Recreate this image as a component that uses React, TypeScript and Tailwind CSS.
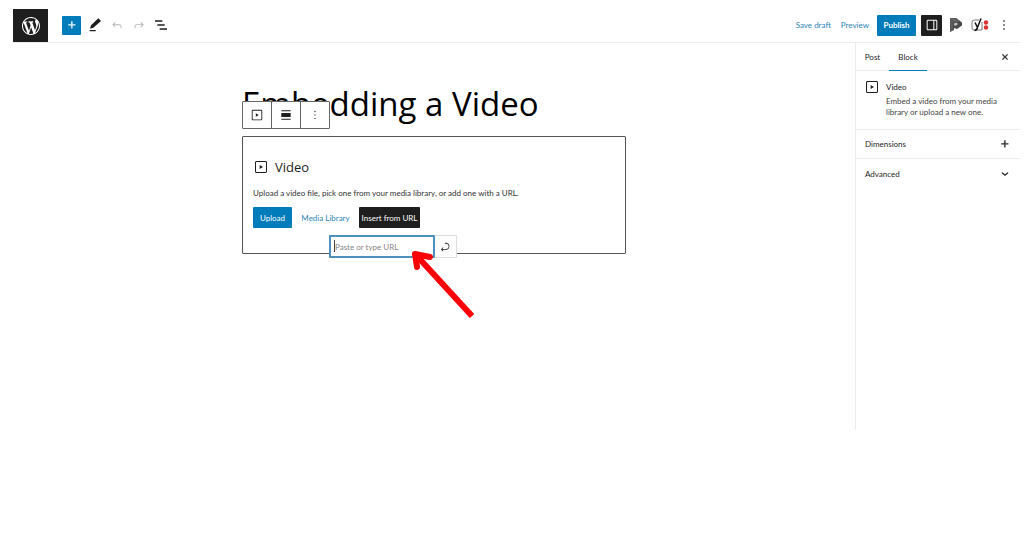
import type { ReactNode } from 'react';

const paths = {
  video:
    'M18.7 3H5.3C4 3 3 4 3 5.3v13.4C3 20 4 21 5.3 21h13.4c1.3 0 2.3-1 2.3-2.3V5.3C21 4 20 3 18.7 3zm.8 15.7c0 .4-.4.8-.8.8H5.3c-.4 0-.8-.4-.8-.8V5.3c0-.4.4-.8.8-.8h13.4c.4 0 .8.4.8.8v13.4zM10 15l5-3-5-3v6z',
  plus: 'M11 12.5V17.5H12.5V12.5H17.5V11H12.5V6H11V11H6V12.5H11Z',
  edit: 'M20.1 5.1L16.9 2 6.2 12.7l-1.3 4.4 4.5-1.3L20.1 5.1zM4 20.8h8v-1.5H4v1.5z',
  undo: 'M18.3 11.7c-.6-.6-1.4-.9-2.3-.9H6.7l2.9-3.3-1.1-1-4.5 5L8.5 16l1-1-2.7-2.7H16c.5 0 .9.2 1.3.5 1 1 1 3.4 1 4.5v.3h1.5v-.2c0-1.5 0-4.3-1.5-5.7z',
  redo: 'M15.6 6.5l-1.1 1 2.9 3.3H8c-.9 0-1.7.3-2.3.9-1.4 1.5-1.4 4.2-1.4 5.6v.2h1.5v-.3c0-1.1 0-3.5 1-4.5.3-.3.7-.5 1.3-.5h9.2L14.5 15l1.1 1.1 4.6-4.6-4.6-5z',
  list: 'M3 5h11v2H3V5Zm3.5 6h11v2h-11v-2ZM21 17H10v2h11v-2Z',
  drawer:
    'M18 4H6c-1.1 0-2 .9-2 2v12c0 1.1.9 2 2 2h12c1.1 0 2-.9 2-2V6c0-1.1-.9-2-2-2zm-4 14.5H6c-.3 0-.5-.2-.5-.5V6c0-.3.2-.5.5-.5h8v13zm4.5-.5c0 .3-.2.5-.5.5h-2.5v-13H18c.3 0 .5.2.5.5v12z',
  more: 'M13 19h-2v-2h2v2zm0-6h-2v-2h2v2zm0-6h-2V5h2v2z',
  align: 'M4 4h16v1.5H4V4Zm0 4.5h16v7H4v-7Zm0 10h16V20H4v-1.5Z',
  close:
    'M12 13.06l3.712 3.713 1.061-1.06L13.061 12l3.712-3.712-1.06-1.06L12 10.938 8.288 7.227l-1.061 1.06L10.939 12l-3.712 3.712 1.06 1.061L12 13.061z',
  chevron: 'M17.5 10.6L12 15l-5.5-4.4.9-1.2L12 13l4.5-3.6 1 1.2z',
  enter:
    'M6.734 16.106l2.176-2.38-1.093-1.028-3.846 4.158 3.846 4.157 1.093-1.027-2.176-2.38h2.811c1.125 0 2.25.03 3.374 0 1.428-.001 3.362-.25 4.963-1.277 1.66-1.065 2.868-2.906 2.868-5.859 0-2.479-1.327-4.896-3.65-5.93-1.82-.813-3.044-.8-4.806-.788l-.567.002v1.5c.184 0 .368 0 .553-.002 1.82-.007 2.704-.014 4.21.657 1.854.827 2.76 2.657 2.76 4.561 0 2.472-.973 3.824-2.178 4.596-1.258.807-2.864 1.04-4.163 1.04h-.02c-1.115.03-2.229 0-3.344 0H6.734z',
};

function Icon({ name, className = 'size-4', bold = false }: { name: keyof typeof paths; className?: string; bold?: boolean }) {
  return (
    <svg viewBox="0 0 24 24" className={className} fill="currentColor" stroke={bold ? 'currentColor' : 'none'} strokeWidth={0.7} aria-hidden="true">
      <path d={paths[name]} />
    </svg>
  );
}

function WordPressMark() {
  return (
    <svg viewBox="0 0 20 20" className="size-[18px]" fill="currentColor" aria-hidden="true">
      <path d="M20 10c0-5.51-4.49-10-10-10C4.48 0 0 4.49 0 10c0 5.52 4.48 10 10 10 5.51 0 10-4.48 10-10zM7.78 15.37L4.37 6.22c.55-.02 1.17-.08 1.17-.08.5-.06.44-1.13-.06-1.11 0 0-1.45.11-2.37.11-.18 0-.37 0-.58-.01C4.12 2.69 6.87 1.11 10 1.11c2.33 0 4.45.87 6.05 2.34-.68-.11-1.65.39-1.65 1.58 0 .74.45 1.36.9 2.1.35.61.55 1.36.55 2.46 0 1.49-1.4 5-1.4 5l-3.03-8.37c.54-.02.82-.17.82-.17.5-.05.44-1.25-.06-1.22 0 0-1.44.12-2.38.12-.87 0-2.33-.12-2.33-.12-.5-.03-.56 1.2-.06 1.22l.92.08 1.26 3.41zM17.41 10c.24-.64.74-1.87.43-4.25.7 1.29 1.05 2.71 1.05 4.25 0 3.29-1.73 6.24-4.4 7.78.97-2.59 1.94-5.2 2.92-7.78zM6.1 18.09C3.12 16.65 1.11 13.53 1.11 10c0-1.3.23-2.48.72-3.59C3.25 10.3 4.67 14.2 6.1 18.09zm4.03-6.63l2.58 6.98c-.86.29-1.76.45-2.71.45-.79 0-1.57-.11-2.29-.33.81-2.38 1.62-4.74 2.42-7.1z" />
    </svg>
  );
}

function PluginMark() {
  return (
    <svg viewBox="0 0 14 14" className="size-3.5" aria-hidden="true">
      <path d="M1 0h6l6 4.5v3L8 11l-3-1v2l-4 2z" fill="#4a4a4a" />
      <path d="M1 0h6l4 3-6 2-4-2z" fill="#606060" />
      <path d="M5 5.500l2.500-.8 1.500 1.300-2 1.500H5z" fill="#c4c4c4" />
      <path d="M1 3l3 2v6l-3 3z" fill="#5c5c5c" />
    </svg>
  );
}

function YoastMark() {
  return (
    <svg viewBox="0 0 18 14" className="h-3.5 w-[18px]" aria-hidden="true">
      <path d="M8 2H3.5Q1 2 1 4.5v5Q1 12 2.5 12H11V4" fill="none" stroke="#777" strokeWidth="1" />
      <path d="m4 4.5 2.5 5L10 .5M6.500 9.500Q5.800 12.500 3.500 12.500" fill="none" stroke="#111" strokeWidth="1.5" />
      <circle cx="15" cy="4.5" r="2.2" fill="#dc3232" />
      <circle cx="15" cy="9.5" r="2.2" fill="#dc3232" />
    </svg>
  );
}

function IconButton({ label, children, className = '' }: { label: string; children: ReactNode; className?: string }) {
  return (
    <button type="button" aria-label={label} className={`flex shrink-0 items-center justify-center ${className}`}>
      {children}
    </button>
  );
}

function Header() {
  return (
    <header className="flex h-[35px] items-center border-b border-[#ececec]">
      <a href="#" aria-label="View posts" className="flex h-[33px] w-[35px] items-center justify-center self-end bg-[#1e1e1e] text-white">
        <WordPressMark />
      </a>
      <div className="ml-3.5 flex items-center gap-1.5">
        <IconButton label="Add block" className="size-[19px] rounded-[1px] bg-[#007cba] text-white">
          <Icon name="plus" className="size-3.5" bold />
        </IconButton>
        <IconButton label="Tools" className="size-4">
          <svg viewBox="0 0 24 24" className="size-4" fill="currentColor" aria-hidden="true">
            <path d="M21 6L17 2 6 12.500l-1.500 5 5-1.500L21 6zM4 21.500h9v-2H4v2z" />
          </svg>
        </IconButton>
        <IconButton label="Undo" className="size-4 text-[#b5b5b5]">
          <Icon name="undo" className="size-3.5" />
        </IconButton>
        <IconButton label="Redo" className="size-4 text-[#b5b5b5]">
          <Icon name="redo" className="size-3.5" />
        </IconButton>
        <IconButton label="List view" className="size-4">
          <Icon name="list" />
        </IconButton>
      </div>
      <div className="ml-auto flex items-center text-[#2c86b8]">
        <button type="button">Save draft</button>
        <button type="button" className="ml-2.5">Preview</button>
        <button type="button" className="ml-2 h-[21px] w-[39px] rounded-[1px] bg-[#007cba] font-bold text-white">Publish</button>
        <IconButton label="Settings" className="ml-[5px] size-[21px] rounded-[1px] bg-[#1e1e1e] text-white">
          <Icon name="drawer" />
        </IconButton>
        <IconButton label="Plugin panel" className="ml-[7px]">
          <PluginMark />
        </IconButton>
        <IconButton label="Yoast SEO" className="ml-2">
          <YoastMark />
        </IconButton>
        <IconButton label="Options" className="mr-2 ml-[7px] text-[#1e1e1e]">
          <Icon name="more" />
        </IconButton>
      </div>
    </header>
  );
}

function BlockToolbar() {
  return (
    <div role="toolbar" aria-label="Block tools" className="absolute top-[58px] left-0 flex h-7 w-[88px] divide-x divide-[#666] rounded-[1px] border border-[#666] bg-white">
      <IconButton label="Video" className="flex-1">
        <Icon name="video" className="size-3.5" />
      </IconButton>
      <IconButton label="Align" className="flex-1">
        <Icon name="align" className="size-3.5" />
      </IconButton>
      <IconButton label="More options" className="flex-1">
        <Icon name="more" className="size-3.5" />
      </IconButton>
    </div>
  );
}

function UrlPopover() {
  return (
    <form className="absolute top-[98px] left-[86px] flex h-[23px] w-[128px] rounded-[1px] border border-[#ddd] bg-white">
      <input
        type="url"
        aria-label="Video URL"
        placeholder="Paste or type URL"
        className="-m-px w-[106px] rounded-[1px] border-2 border-[#4f8fbd] pl-1 text-[8px] outline-none placeholder:text-[#858585]"
      />
      <span className="absolute top-1 left-1 h-3 w-px bg-[#444]" />
      <IconButton label="Apply" className="flex-1">
        <Icon name="enter" className="size-3" />
      </IconButton>
      <svg viewBox="0 0 64 70" className="absolute top-3 left-[80px] h-[70px] w-16" fill="none" stroke="#fb0007" aria-hidden="true">
        <path d="M62 68 6 7" strokeWidth="6" />
        <path d="M7 19 5 6l15 3" strokeWidth="6" strokeLinecap="round" strokeLinejoin="round" />
      </svg>
    </form>
  );
}

function Editor() {
  return (
    <main className="flex-1">
      <div className="relative mx-auto w-[384px] max-w-full">
        <h1 className="pt-9 font-['Open_Sans','Noto_Sans',sans-serif] text-[33px] leading-[50px] whitespace-nowrap text-black">Embedding a Video</h1>
        <BlockToolbar />
        <section className="relative mt-[7px] h-[118px] rounded-[1px] border border-[#555] px-2.5 pt-5">
          <h2 className="flex items-center gap-1.5 font-['Open_Sans','Noto_Sans',sans-serif] text-[13px] leading-5">
            <Icon name="video" className="size-4" />
            Video
          </h2>
          <p className="mt-2.5 leading-3 text-[#333]">Upload a video file, pick one from your media library, or add one with a URL.</p>
          <div className="mt-2 flex h-[21px]">
            <button type="button" className="w-[39px] rounded-[1px] bg-[#007cba] text-white">Upload</button>
            <button type="button" className="w-[67px] text-[#2c86b8]">Media Library</button>
            <button type="button" className="w-[61px] rounded-[1px] bg-[#1e1e1e] text-white">Insert from URL</button>
          </div>
          <UrlPopover />
        </section>
      </div>
    </main>
  );
}

function Sidebar() {
  return (
    <aside className="min-h-[387px] w-[165px] shrink-0 border-l border-[#ececec]">
      <div role="tablist" className="flex h-7 items-stretch border-b border-[#ececec]">
        <button type="button" role="tab" aria-selected="false" className="w-[33px]">Post</button>
        <button type="button" role="tab" aria-selected="true" className="-mb-px w-[38px] border-b border-[#007cba]">Block</button>
        <IconButton label="Close settings" className="mr-2 ml-auto">
          <Icon name="close" bold className="size-3.5" />
        </IconButton>
      </div>
      <div className="flex h-[59px] gap-1.5 border-b border-[#ececec] pt-2 pl-2">
        <Icon name="video" className="size-4 shrink-0" />
        <div>
          <h2 className="leading-[17px]">Video</h2>
          <p className="w-[124px] leading-[11px] text-[#444]">Embed a video from your media library or upload a new one.</p>
        </div>
      </div>
      <button type="button" className="flex h-[29px] w-full items-center justify-between border-b border-[#ececec] pr-2 pl-[9px]">
        Dimensions
        <Icon name="plus" bold className="size-3.5" />
      </button>
      <button type="button" className="flex h-[29px] w-full items-center justify-between pr-2 pl-[9px]">
        Advanced
        <Icon name="chevron" bold className="size-3.5" />
      </button>
    </aside>
  );
}

export default function App() {
  return (
    <div className="min-h-screen bg-white pt-2 pr-1 pl-[13px] font-[Lato,'Noto_Sans',sans-serif] text-[8px] text-[#1e1e1e]">
      <Header />
      <div className="flex">
        <Editor />
        <Sidebar />
      </div>
    </div>
  );
}
